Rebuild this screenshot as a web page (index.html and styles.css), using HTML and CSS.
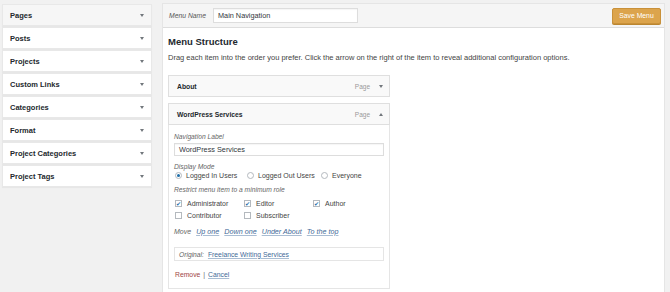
FILE: index.html
```html
<!DOCTYPE html>
<html lang="en">

<head>
  <meta charset="UTF-8">
  <title>Menus</title>
  <link rel="stylesheet" href="styles.css">
</head>

<body>
  <div id="wrapper">
    <div class="sidebar">
      <div class="accordion-item open"><span>Pages</span><span class="arrow down"></span></div>
      <div class="accordion-item"><span>Posts</span><span class="arrow down"></span></div>
      <div class="accordion-item"><span>Projects</span><span class="arrow down"></span></div>
      <div class="accordion-item"><span>Custom Links</span><span class="arrow down"></span></div>
      <div class="accordion-item"><span>Categories</span><span class="arrow down"></span></div>
      <div class="accordion-item"><span>Format</span><span class="arrow down"></span></div>
      <div class="accordion-item"><span>Project Categories</span><span class="arrow down"></span></div>
      <div class="accordion-item"><span>Project Tags</span><span class="arrow down"></span></div>
    </div>

    <div class="menu-panel">
      <div class="menu-header">
        <label class="menu-name-label">Menu Name</label>
        <div class="text-input menu-name-input">Main Navigation</div>
        <button class="save-button">Save Menu</button>
      </div>

      <div class="menu-body">
        <h3 class="section-title">Menu Structure</h3>
        <p class="description">
          Drag each item into the order you prefer. Click the arrow on the right of the item to reveal additional configuration options.
        </p>

        <div class="menu-item">
          <div class="item-bar">
            <span class="item-title">About</span>
            <span class="item-type">Page</span>
            <span class="arrow down"></span>
          </div>
        </div>

        <div class="menu-item">
          <div class="item-bar">
            <span class="item-title">WordPress Services</span>
            <span class="item-type">Page</span>
            <span class="arrow up"></span>
          </div>
          <div class="item-settings">
            <div class="field-label">Navigation Label</div>
            <div class="text-input label-input">WordPress Services</div>

            <div class="field-label display-label">Display Mode</div>
            <div class="option-grid radios">
              <div class="option"><span class="radio checked"></span>Logged In Users</div>
              <div class="option"><span class="radio"></span>Logged Out Users</div>
              <div class="option"><span class="radio"></span>Everyone</div>
            </div>

            <div class="field-label role-label">Restrict menu item to a minimum role</div>
            <div class="option-grid checkboxes">
              <div class="option"><span class="checkbox checked">&#10004;</span>Administrator</div>
              <div class="option"><span class="checkbox checked">&#10004;</span>Editor</div>
              <div class="option"><span class="checkbox checked">&#10004;</span>Author</div>
              <div class="option"><span class="checkbox"></span>Contributor</div>
              <div class="option"><span class="checkbox"></span>Subscriber</div>
            </div>

            <div class="move-row">
              <span class="field-label">Move</span>
              <a href="#">Up one</a>
              <a href="#">Down one</a>
              <a href="#">Under About</a>
              <a href="#">To the top</a>
            </div>

            <div class="original-box">
              <span class="field-label">Original:</span>
              <a href="#">Freelance Writing Services</a>
            </div>

            <div class="action-row">
              <a href="#" class="remove-link">Remove</a>
              <span class="divider">|</span>
              <a href="#" class="cancel-link">Cancel</a>
            </div>
          </div>
        </div>
      </div>
    </div>
  </div>
</body>

</html>
```

FILE: styles.css
```css
body {
  margin: 0;
  background-color: #f1f1f1;
  font-family: "Liberation Sans", Arial, sans-serif;
  color: #32373c;
}

#wrapper {
  display: flex;
  flex-direction: row;
  align-items: flex-start;
  padding-top: 3px;
  padding-left: 2px;
  height: 289px;
  overflow: hidden;
}

/* Left column with the collapsed meta boxes */
.sidebar {
  width: 150px;
  margin-top: 1px;
  display: flex;
  flex-direction: column;
  gap: 1px;
}

.accordion-item {
  box-sizing: border-box;
  display: flex;
  justify-content: space-between;
  align-items: center;
  height: 22px;
  padding: 0 7px 0 7px;
  background-color: white;
  border: 1px solid #e8e8e8;
  box-shadow: 0 1px 1px rgba(0, 0, 0, 0.04);
  font-size: 7.5px;
  font-weight: bold;
  color: #23282d;
}

.accordion-item.open {
  background-color: #f6f6f6;
}

/* Small toggle triangles */
.arrow {
  width: 0;
  height: 0;
  border-left: 2.5px solid transparent;
  border-right: 2.5px solid transparent;
}

.arrow.down {
  border-top: 3px solid #72777c;
}

.arrow.up {
  border-bottom: 3px solid #72777c;
}

/* Right column */
.menu-panel {
  margin-left: 10px;
  width: 501px;
  height: 289px;
  background-color: white;
  border: 1px solid #e5e5e5;
  border-bottom: none;
}

.menu-header {
  display: flex;
  flex-direction: row;
  align-items: center;
  height: 23px;
  padding: 0 3px 0 6px;
  background-color: #f5f5f5;
  border-bottom: 1px solid #dddddd;
}

.menu-name-label {
  font-size: 6.8px;
  font-style: italic;
  color: #555;
  margin-right: 7px;
}

.text-input {
  box-sizing: border-box;
  display: flex;
  align-items: center;
  border: 1px solid #dddddd;
  background-color: white;
  font-size: 7.3px;
  color: #32373c;
  padding-left: 4px;
  box-shadow: inset 0 1px 1px rgba(0, 0, 0, 0.04);
}

.menu-name-input {
  width: 145px;
  height: 15px;
}

.save-button {
  margin-left: auto;
  height: 16px;
  width: 49px;
  padding: 0;
  border: 1px solid #c9913a;
  border-radius: 2px;
  background-color: #dca44c;
  color: white;
  font-family: "Liberation Sans", Arial, sans-serif;
  font-size: 6.8px;
  box-shadow: 0 1px 0 #bb8630;
}

.menu-body {
  padding: 7px 5px 0 5px;
}

.section-title {
  margin: 0;
  font-size: 9.5px;
  font-weight: bold;
  color: #23282d;
  line-height: 14px;
}

.description {
  margin: 4px 0 12px 0;
  font-size: 7.5px;
  color: #444;
  line-height: 10px;
  white-space: nowrap;
}

.menu-item {
  width: 222px;
  margin-bottom: 6px;
}

.item-bar {
  box-sizing: border-box;
  display: flex;
  flex-direction: row;
  align-items: center;
  height: 22px;
  padding: 0 6px 0 8px;
  background-color: #f9f9f9;
  border: 1px solid #dfdfdf;
}

.item-title {
  font-size: 6.8px;
  font-weight: bold;
  color: #23282d;
}

.item-type {
  margin-left: auto;
  font-size: 6.5px;
  color: #999;
  margin-right: 9px;
}

.item-settings {
  box-sizing: border-box;
  height: 164px;
  padding: 7px 6px 0 5px;
  border: 1px solid #e5e5e5;
  border-top: none;
}

.field-label {
  font-size: 6.7px;
  font-style: italic;
  color: #666;
  line-height: 9px;
}

.label-input {
  width: 210px;
  height: 13px;
  margin-top: 2px;
}

.display-label {
  margin-top: 5.5px;
}

.role-label {
  margin-top: 4px;
}

.option-grid {
  display: grid;
  row-gap: 2px;
  font-size: 7px;
  color: #444;
}

.radios {
  grid-template-columns: 72px 74px auto;
}

.checkboxes {
  grid-template-columns: 69px 69px auto;
  margin-top: 4.5px;
}

.option {
  display: flex;
  align-items: center;
  height: 10px;
  white-space: nowrap;
}

.radio {
  box-sizing: border-box;
  flex-shrink: 0;
  width: 7px;
  height: 7px;
  border-radius: 50%;
  border: 1px solid #b4b9be;
  margin-left: 1px;
  margin-right: 4px;
  display: flex;
  align-items: center;
  justify-content: center;
  background-color: white;
}

.radio.checked::after {
  content: "";
  width: 3px;
  height: 3px;
  border-radius: 50%;
  background-color: #1e6ea8;
}

.checkbox {
  box-sizing: border-box;
  flex-shrink: 0;
  width: 7px;
  height: 7px;
  border: 1px solid #b4b9be;
  margin-left: 1px;
  margin-right: 5px;
  display: flex;
  align-items: center;
  justify-content: center;
  font-size: 6px;
  color: #1e6ea8;
  background-color: white;
}

a {
  color: #3f6a98;
  text-decoration-color: #a9bdd3;
}

.move-row {
  display: flex;
  align-items: center;
  gap: 5px;
  height: 9px;
  margin-top: 6.5px;
}

.move-row .field-label {
  font-size: 7px;
}

.move-row a {
  font-style: italic;
  font-size: 7.2px;
}

.original-box {
  box-sizing: border-box;
  display: flex;
  align-items: center;
  gap: 4px;
  width: 210px;
  height: 14px;
  margin-top: 11.5px;
  padding-left: 4px;
  border: 1px solid #e5e5e5;
}

.original-box a {
  font-size: 6.8px;
}

.action-row {
  display: flex;
  align-items: center;
  gap: 3px;
  height: 10px;
  margin-top: 8px;
  padding-left: 1px;
  font-size: 6.8px;
}

.remove-link {
  color: #a04545;
  text-decoration: none;
}

.divider {
  color: #666;
}
```
